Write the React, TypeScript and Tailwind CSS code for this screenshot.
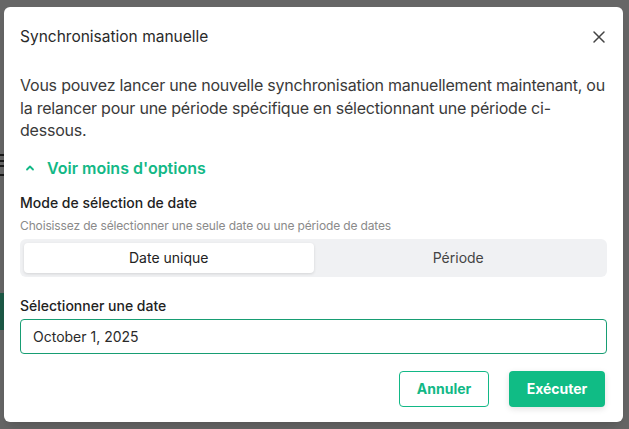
import React from "react";

export default function App() {
  return (
    <div
      className="relative w-[629px] h-[429px] overflow-hidden bg-[#666666]"
      style={{ fontFamily: "Inter, 'Noto Sans', sans-serif" }}
    >
      {/* page content peeking behind the overlay */}
      <div className="absolute left-0 top-[154px] w-[4px] h-[2px] bg-[#1a1a1a]" />
      <div className="absolute left-0 top-[160px] w-[4px] h-[2px] bg-[#1a1a1a]" />
      <div className="absolute left-0 top-[165px] w-[4px] h-[2px] bg-[#1a1a1a]" />
      <div className="absolute left-0 top-[174px] w-[4px] h-[2px] bg-[#1a1a1a]" />
      <div className="absolute left-0 top-[293px] w-[4px] h-[37px] bg-[#1d5a47]" />

      <div className="absolute left-[4px] top-[7px] w-[619px] h-[415px] bg-white rounded-[6px] shadow-lg px-[16px] pb-[15px] pt-[19px] flex flex-col">
        <div className="flex items-center justify-between h-[22px]">
          <h2 className="text-[15.5px] leading-[22px] text-[#2a2a2a] font-normal">
            Synchronisation manuelle
          </h2>
          <button className="w-[20px] h-[20px] flex items-center justify-center mr-[-2px] text-[#444]">
            <svg width="14" height="14" viewBox="0 0 14 14" fill="none" stroke="currentColor" strokeWidth="1.5" strokeLinecap="round">
              <path d="M2 2 L12 12 M12 2 L2 12" />
            </svg>
          </button>
        </div>

        <p className="mt-[26px] mr-[-6px] text-[16px] leading-[22.5px] tracking-[-0.22px] text-[#3a3a3a]">
          Vous pouvez lancer une nouvelle synchronisation manuellement maintenant, ou la relancer pour une période spécifique en sélectionnant une période ci-dessous.
        </p>

        <button className="mt-[14px] h-[24px] flex items-center gap-[12px] text-[#12b886] text-[16px] font-semibold pl-[5px]">
          <svg width="10" height="10" viewBox="0 0 10 10" fill="none" stroke="currentColor" strokeWidth="1.8" strokeLinecap="round" strokeLinejoin="round">
            <path d="M2 6.5 L5 3.5 L8 6.5" />
          </svg>
          <span>Voir moins d'options</span>
        </button>

        <div className="mt-[13px] text-[14px] leading-[20px] font-medium text-[#222]">
          Mode de sélection de date
        </div>
        <div className="mt-[5px] text-[12px] leading-[16px] tracking-[-0.14px] text-[#8a8a8a]">
          Choisissez de sélectionner une seule date ou une période de dates
        </div>

        <div className="mt-[5px] h-[39px] bg-[#f0f1f3] rounded-[6px] p-[4px] flex">
          <div className="flex-1 bg-white rounded-[4px] shadow-[0_1px_3px_rgba(0,0,0,0.12)] flex items-center justify-center text-[14px] text-[#222]">
            Date unique
          </div>
          <div className="flex-1 flex items-center justify-center text-[14px] text-[#444]">
            Période
          </div>
        </div>

        <div className="mt-[19px] text-[14px] leading-[20px] font-medium text-[#222]">
          Sélectionner une date
        </div>
        <div className="mt-[3px] h-[35px] border border-[#179d73] rounded-[4px] flex items-center px-[12px] text-[14px] text-[#2a2a2a]">
          October 1, 2025
        </div>

        <div className="mt-[17px] flex justify-end gap-[20px] pr-[2px]">
          <button className="w-[90px] h-[36px] border border-[#12b886] rounded-[4px] bg-white text-[#12b886] text-[14px] font-bold">
            Annuler
          </button>
          <button className="w-[96px] h-[36px] rounded-[4px] bg-[#10bc85] text-white text-[14px] font-bold shadow-[0_2px_6px_rgba(0,0,0,0.12)]">
            Exécuter
          </button>
        </div>
      </div>
    </div>
  );
}
